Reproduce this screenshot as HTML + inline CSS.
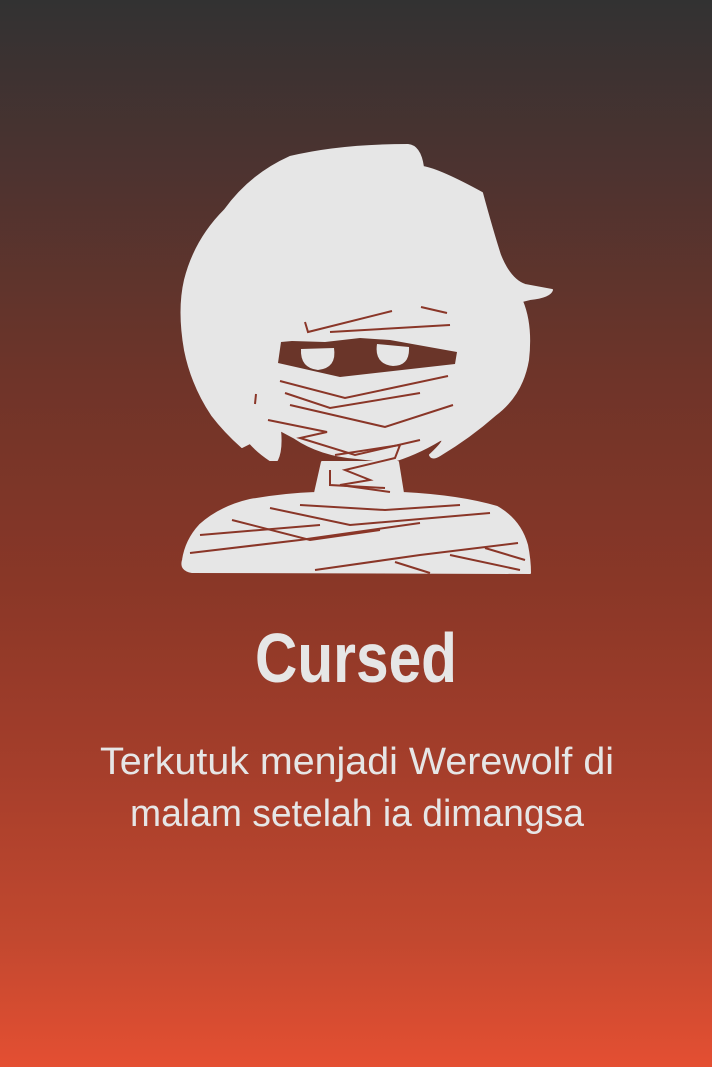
<!DOCTYPE html>
<html><head><meta charset="utf-8"><style>
html,body{margin:0;padding:0}
body{width:712px;height:1067px;overflow:hidden;background:linear-gradient(#323232 0%,#4b3330 15%,#6e3429 35%,#8a3727 55%,#a53e2b 72%,#c2482f 88%,#e44f32 100%);}
svg{position:absolute;left:0;top:0}
</style></head><body>
<svg width="712" height="1067" viewBox="0 0 712 1067">
<g fill="#e6e6e6" stroke="#e6e6e6" stroke-width="2" stroke-linejoin="round">
<path d="M408,145 Q420,146 423,167 Q440,170 482,193 Q492,230 500,255 Q510,280 525,285 L552,290 Q550,297 530,299 L522,301 Q532,325 528,360 Q522,395 495,415 Q470,437 440,455 Q432,460 430,455 Q448,438 440,440 Q415,455 390,462 L357,458 Q320,455 295,438 L280,430 Q282,450 277,460 L270,460 Q258,452 250,443 L242,447 Q225,432 212,415 Q192,385 185,350 Q178,310 185,280 Q195,240 225,210 Q250,175 290,157 Q340,145 408,145 Z"/>
<path d="M322,462 L398,462 L403,493 Q460,496 497,507 Q520,520 527,545 Q530,560 530,573 L192,572 Q180,570 183,560 Q186,540 200,525 Q220,507 250,500 Q285,494 315,493 Z"/>
</g>
<path d="M281,342 L292,341 L325,342 L360,338 L390,340 L457,352 L455,364 L340,377 L278,363 Z" fill="#6a3529"/>
<path d="M301,349 L334,348 Q337,368 318,370 Q300,368 301,349 Z" fill="#e6e6e6"/>
<path d="M377,344 L409,347 Q410,366 393,366 Q374,364 377,344 Z" fill="#e6e6e6"/>
<g stroke="#8a3628" stroke-width="2" fill="none">
<path d="M305,322 L308,332 L392,311"/>
<path d="M330,332 L450,325"/>
<path d="M421,307 L447,313"/>
<path d="M280,381 L345,398 L448,376"/>
<path d="M285,393 L330,408 L420,393"/>
<path d="M290,405 L385,427 L453,405"/>
<path d="M268,420 L327,432 L300,438 L355,455 L420,440"/>
<path d="M335,455 L400,445 L395,458 L345,470 L370,480 L340,485 L390,492"/>
<path d="M330,470 L330,485 L385,488"/>
<path d="M300,505 L385,510 L460,505"/>
<path d="M270,508 L350,525 L490,513"/>
<path d="M232,520 L310,540 L380,530"/>
<path d="M200,535 L320,525"/>
<path d="M190,553 L300,540 L420,523"/>
<path d="M315,570 L420,555 L518,543"/>
<path d="M395,562 L430,573"/>
<path d="M450,555 L520,570"/>
<path d="M485,548 L525,560"/>
<path d="M256,394 L255,404"/>
</g>
<text x="356" y="682" text-anchor="middle" font-family="Liberation Sans, sans-serif" font-weight="bold" font-size="70" fill="#e6e6e6" textLength="202" lengthAdjust="spacingAndGlyphs">Cursed</text>
<text x="357" y="774" text-anchor="middle" font-family="Liberation Sans, sans-serif" font-size="38" fill="#e6e6e6" textLength="514" lengthAdjust="spacingAndGlyphs">Terkutuk menjadi Werewolf di</text>
<text x="357" y="826" text-anchor="middle" font-family="Liberation Sans, sans-serif" font-size="38" fill="#e6e6e6" textLength="454" lengthAdjust="spacingAndGlyphs">malam setelah ia dimangsa</text>
</svg>
</body></html>
